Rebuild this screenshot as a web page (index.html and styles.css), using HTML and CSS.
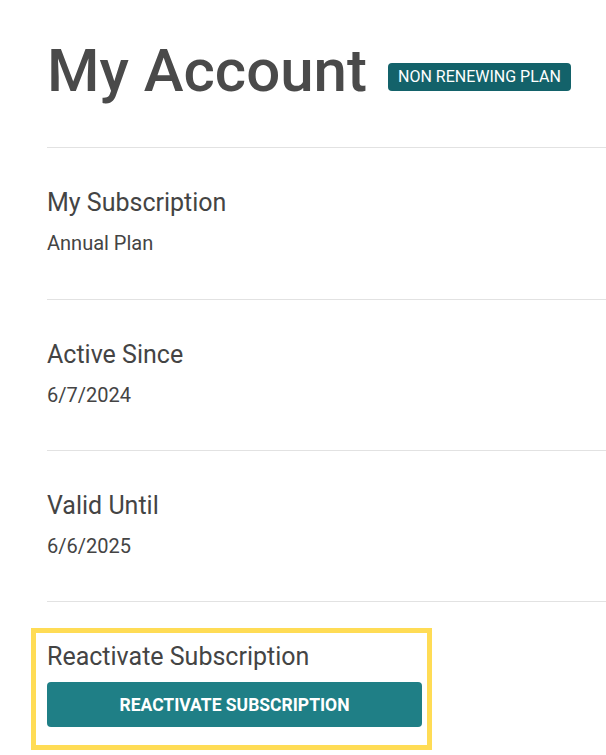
FILE: index.html
```html
<!DOCTYPE html>
<html>
<head>
<meta charset="utf-8">
<link rel="stylesheet" href="styles.css">
</head>
<body>
<main class="page">
  <header class="header">
    <h1 class="title">My Account</h1>
    <span class="badge">NON RENEWING PLAN</span>
  </header>
  <section class="section">
    <h2 class="label">My Subscription</h2>
    <p class="value">Annual Plan</p>
  </section>
  <section class="section">
    <h2 class="label">Active Since</h2>
    <p class="value">6/7/2024</p>
  </section>
  <section class="section">
    <h2 class="label">Valid Until</h2>
    <p class="value">6/6/2025</p>
  </section>
  <section class="reactivate">
    <h2 class="label">Reactivate Subscription</h2>
    <button class="btn">REACTIVATE SUBSCRIPTION</button>
  </section>
</main>
</body>
</html>
```
FILE: styles.css
```css
html, body {
  margin: 0;
  padding: 0;
  background: #ffffff;
}
body {
  font-family: Roboto, "Liberation Sans", sans-serif;
  color: #444444;
  overflow: hidden;
}
.page {
  padding: 35px 0 0 47px;
}
.header {
  display: flex;
  align-items: center;
  gap: 21px;
  padding-bottom: 40px;
  border-bottom: 1px solid #e2e2e2;
}
.title {
  margin: 0;
  font-size: 60px;
  line-height: 72px;
  font-weight: 500;
  color: #4a4a4a;
}
.badge {
  margin-top: 12px;
  background: #13626a;
  color: #ffffff;
  font-size: 16px;
  line-height: 28px;
  padding: 0 10px;
  border-radius: 4px;
  font-weight: 400;
}
.section {
  padding: 39px 0 43px;
  border-bottom: 1px solid #e2e2e2;
}
.section:first-of-type {
  padding-bottom: 44px;
}
.label {
  margin: 0;
  font-size: 25px;
  line-height: 32px;
  font-weight: 400;
  color: #444444;
}
.value {
  margin: 12px 0 0;
  font-size: 20px;
  line-height: 24px;
  color: #444444;
}
.reactivate {
  margin: 26px 0 0 -16px;
  width: 375px;
  border: 5px solid #ffdc55;
  padding: 8px 5px 18px 11px;
}
.btn {
  display: block;
  margin-top: 9px;
  width: 375px;
  height: 45px;
  border: none;
  border-radius: 4px;
  background: #1f7f86;
  color: #ffffff;
  font-family: Roboto, "Liberation Sans", sans-serif;
  font-size: 17.5px;
  font-weight: 700;
}
```
